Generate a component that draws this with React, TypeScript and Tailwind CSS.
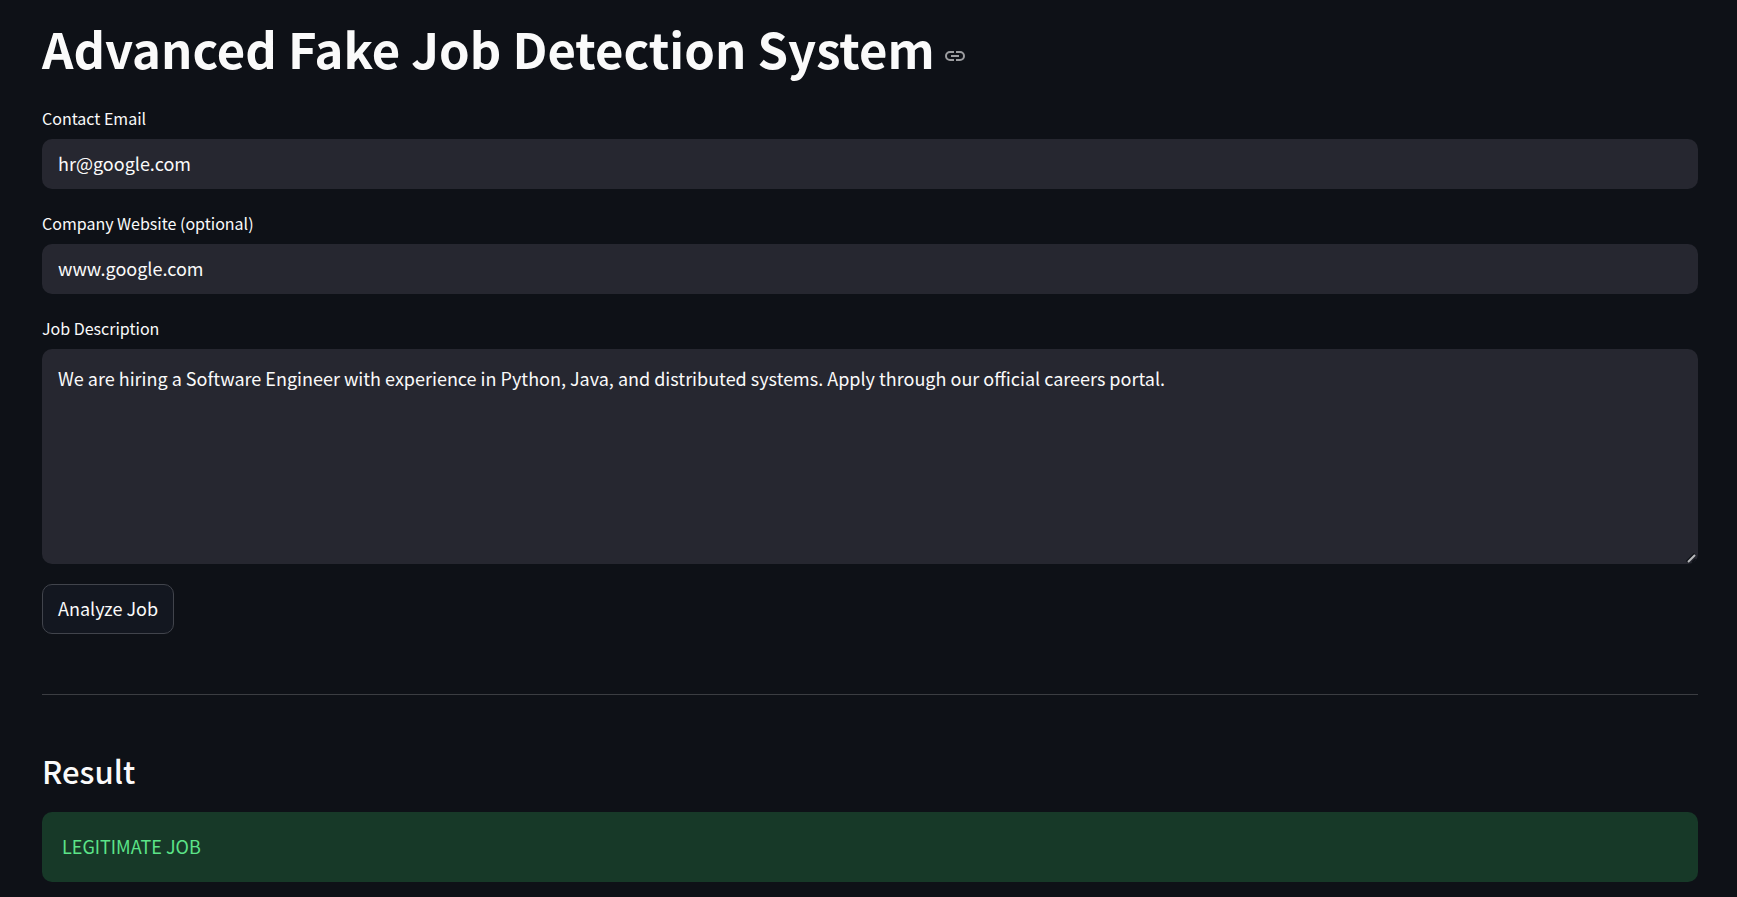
import {useState} from 'react';
import type {ReactNode} from 'react';

type FieldProps = {
    id: string;
    label: string;
    children: ReactNode;
};

const fieldClass =
    'block w-full rounded-[10px] bg-[#262730] px-4 text-lg leading-7 text-[#fafafa] outline-none focus:ring-1 focus:ring-[#ff4b4b]';

function Field({id, label, children}: FieldProps) {
    return (
        <div>
            <label htmlFor={id} className="block h-[35px] text-base leading-7">{label}</label>
            {children}
        </div>
    );
}

function LinkIcon() {
    return (
        <svg
            className="h-6 w-6"
            viewBox="0 0 24 24"
            fill="none"
            stroke="currentColor"
            strokeWidth="2"
            aria-hidden="true"
        >
            <path d="M11 8H7a4 4 0 0 0 0 8h4M13 8h4a4 4 0 0 1 0 8h-4M8 12h8"/>
        </svg>
    );
}

function ResizeGrip() {
    return (
        <svg
            className="pointer-events-none absolute right-0.5 bottom-px h-2.5 w-2.5"
            viewBox="0 0 10 10"
            fill="none"
            aria-hidden="true"
        >
            <path d="M0.5 8.5L8.5 0.5M6 9.5L9.5 6" stroke="#0e1117" strokeWidth="1.6"/>
            <path d="M2 9L9 2" stroke="#b9babc" strokeWidth="2"/>
        </svg>
    );
}

export default function App() {
    const [email, setEmail] = useState('hr@google.com');
    const [website, setWebsite] = useState('www.google.com');
    const [description, setDescription] = useState(
        'We are hiring a Software Engineer with experience in Python, Java, and distributed systems. Apply through our official careers portal.',
    );

    return (
        <main className="min-h-screen bg-[#0e1117] pt-5 pr-[39px] pb-[15px] pl-[42px] font-['Source_Sans_Pro','Noto_Sans_CJK_SC',sans-serif] text-[#fafafa] [color-scheme:dark]">
            <div id="title" className="flex h-16 items-start gap-2">
                <h1 className="text-[49px] leading-[56px] font-bold">Advanced Fake Job Detection System</h1>
                <a href="#title" aria-label="Link to heading" className="mt-6 text-[#9c9da0]">
                    <LinkIcon/>
                </a>
            </div>

            <form className="mt-5 flex flex-col gap-5" onSubmit={(event) => event.preventDefault()}>
                <Field id="email" label="Contact Email">
                    <input
                        id="email"
                        type="text"
                        value={email}
                        onChange={(event) => setEmail(event.target.value)}
                        className={`${fieldClass} h-[50px] pb-0.5`}
                    />
                </Field>
                <Field id="website" label="Company Website (optional)">
                    <input
                        id="website"
                        type="text"
                        value={website}
                        onChange={(event) => setWebsite(event.target.value)}
                        className={`${fieldClass} h-[50px] pb-0.5`}
                    />
                </Field>
                <Field id="description" label="Job Description">
                    <div className="relative">
                        <textarea
                            id="description"
                            value={description}
                            onChange={(event) => setDescription(event.target.value)}
                            className={`${fieldClass} h-[215px] resize-y pt-[15px] pb-4 [&::-webkit-resizer]:bg-transparent`}
                        />
                        <ResizeGrip/>
                    </div>
                </Field>
                <button
                    type="submit"
                    className="h-[50px] self-start rounded-[10px] border border-[#41444c] bg-[#131720] px-[15px] pb-0.5 text-lg leading-7 hover:border-[#ff4b4b] hover:text-[#ff4b4b]"
                >
                    Analyze Job
                </button>
            </form>

            <hr className="my-[60px] border-t border-[#3b3d42]"/>

            <section>
                <h3 className="text-[31px] leading-8 font-medium">Result</h3>
                <div role="alert" className="mt-[25px] rounded-[10px] bg-[#173928] px-5 pt-5 pb-[22px] text-lg leading-7 text-[#5ce488]">
                    LEGITIMATE JOB
                </div>
            </section>
        </main>
    );
}
